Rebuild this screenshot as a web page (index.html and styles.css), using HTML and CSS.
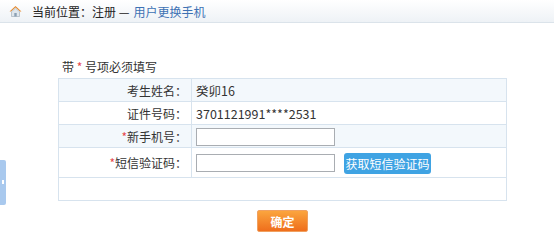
FILE: index.html
```html
<!DOCTYPE html>
<html>
  <head>
    <meta charset="utf-8">
    <title>用户更换手机</title>
    <link rel="stylesheet" href="styles.css">
  </head>
  <body>
    <div class="location">
      <svg class="home-icon" width="13" height="12" viewBox="0 0 13 12">
        <path d="M6.5 1 L12.5 6.5 L11 6.5 L6.5 2.6 L2 6.5 L0.5 6.5 Z" fill="#e88a2a"/>
        <path d="M2.5 6.6 L6.5 3.2 L10.5 6.6 L10.5 11.5 L2.5 11.5 Z" fill="#dfe6ec" stroke="#9aa8b4" stroke-width="0.6"/>
        <rect x="5.3" y="8" width="2.4" height="3.5" fill="#8aa0b4"/>
      </svg>
      <span>当前位置：注册 — </span><a class="crumb">用户更换手机</a>
    </div>

    <div class="side-tab"><span class="arrow"></span></div>

    <div class="content">
      <p class="note">带 <span class="star">*</span> 号项必须填写</p>
      <table class="form-table">
        <tr class="alt">
          <td class="label">考生姓名：</td>
          <td class="value">癸卯16</td>
        </tr>
        <tr>
          <td class="label">证件号码：</td>
          <td class="value">3701121991****2531</td>
        </tr>
        <tr class="alt">
          <td class="label"><span class="star">*</span>新手机号：</td>
          <td class="value"><input type="text" class="field"></td>
        </tr>
        <tr class="tall">
          <td class="label"><span class="star">*</span>短信验证码：</td>
          <td class="value"><input type="text" class="field"><button class="sms-btn">获取短信验证码</button></td>
        </tr>
        <tr>
          <td class="empty" colspan="2"></td>
        </tr>
      </table>
      <div class="actions">
        <button class="ok-btn">确定</button>
      </div>
    </div>
  </body>
</html>
```

FILE: styles.css
```css
body {
  margin: 0;
  font-family: "Noto Sans CJK SC", "Liberation Sans", sans-serif;
  font-size: 12px;
  color: #333;
  background: #fff;
}

.location {
  height: 22px;
  display: flex;
  align-items: center;
  padding-left: 9px;
  background: linear-gradient(#ffffff, #eef2f6);
  border-bottom: 1px solid #dbe3ea;
  color: #222;
}

.home-icon {
  margin-right: 10px;
}

.crumb {
  color: #3d72b4;
  margin-left: 4px;
}

.side-tab {
  position: absolute;
  left: 0;
  top: 160px;
  width: 6px;
  height: 45px;
  background: #a9c9ee;
  border-radius: 0 2px 2px 0;
}

.side-tab .arrow {
  position: absolute;
  left: 2px;
  top: 20px;
  width: 2px;
  height: 4px;
  background: #fff;
}

.content {
  padding: 0 47px 0 58px;
}

.note {
  margin: 37px 0 4px 4px;
  line-height: 14px;
  font-size: 12px;
}

.star {
  color: #e5484d;
}

.form-table {
  width: 449px;
  border-collapse: collapse;
  border: 1px solid #d7e3ee;
}

.form-table td {
  border: 1px solid #d7e3ee;
  height: 22px;
  padding: 0;
}

.form-table tr.alt td {
  background: #f3f8fc;
}

.form-table tr.tall td {
  height: 29px;
}

.form-table .label {
  width: 128px;
  text-align: right;
  padding-right: 4px;
}

.form-table .value {
  padding-left: 4px;
  font-size: 12.5px;
}

.field {
  box-sizing: border-box;
  width: 139px;
  height: 18px;
  border: 1px solid #a9adb2;
  margin: 0;
  vertical-align: middle;
}

.sms-btn {
  margin-left: 9px;
  height: 21px;
  width: 87px;
  border: none;
  border-radius: 3px;
  background: #3fa3e3;
  color: #fff;
  font-family: inherit;
  font-size: 12px;
  padding: 0;
  vertical-align: middle;
}

.actions {
  width: 449px;
  display: flex;
  justify-content: center;
  margin-top: 9px;
}

.ok-btn {
  width: 51px;
  height: 22px;
  border: 1px solid #f0a060;
  border-radius: 2px;
  background: linear-gradient(#fba53e, #ef6e1c);
  color: #fff;
  font-family: inherit;
  font-size: 12px;
  font-weight: bold;
  padding: 0;
}
```
